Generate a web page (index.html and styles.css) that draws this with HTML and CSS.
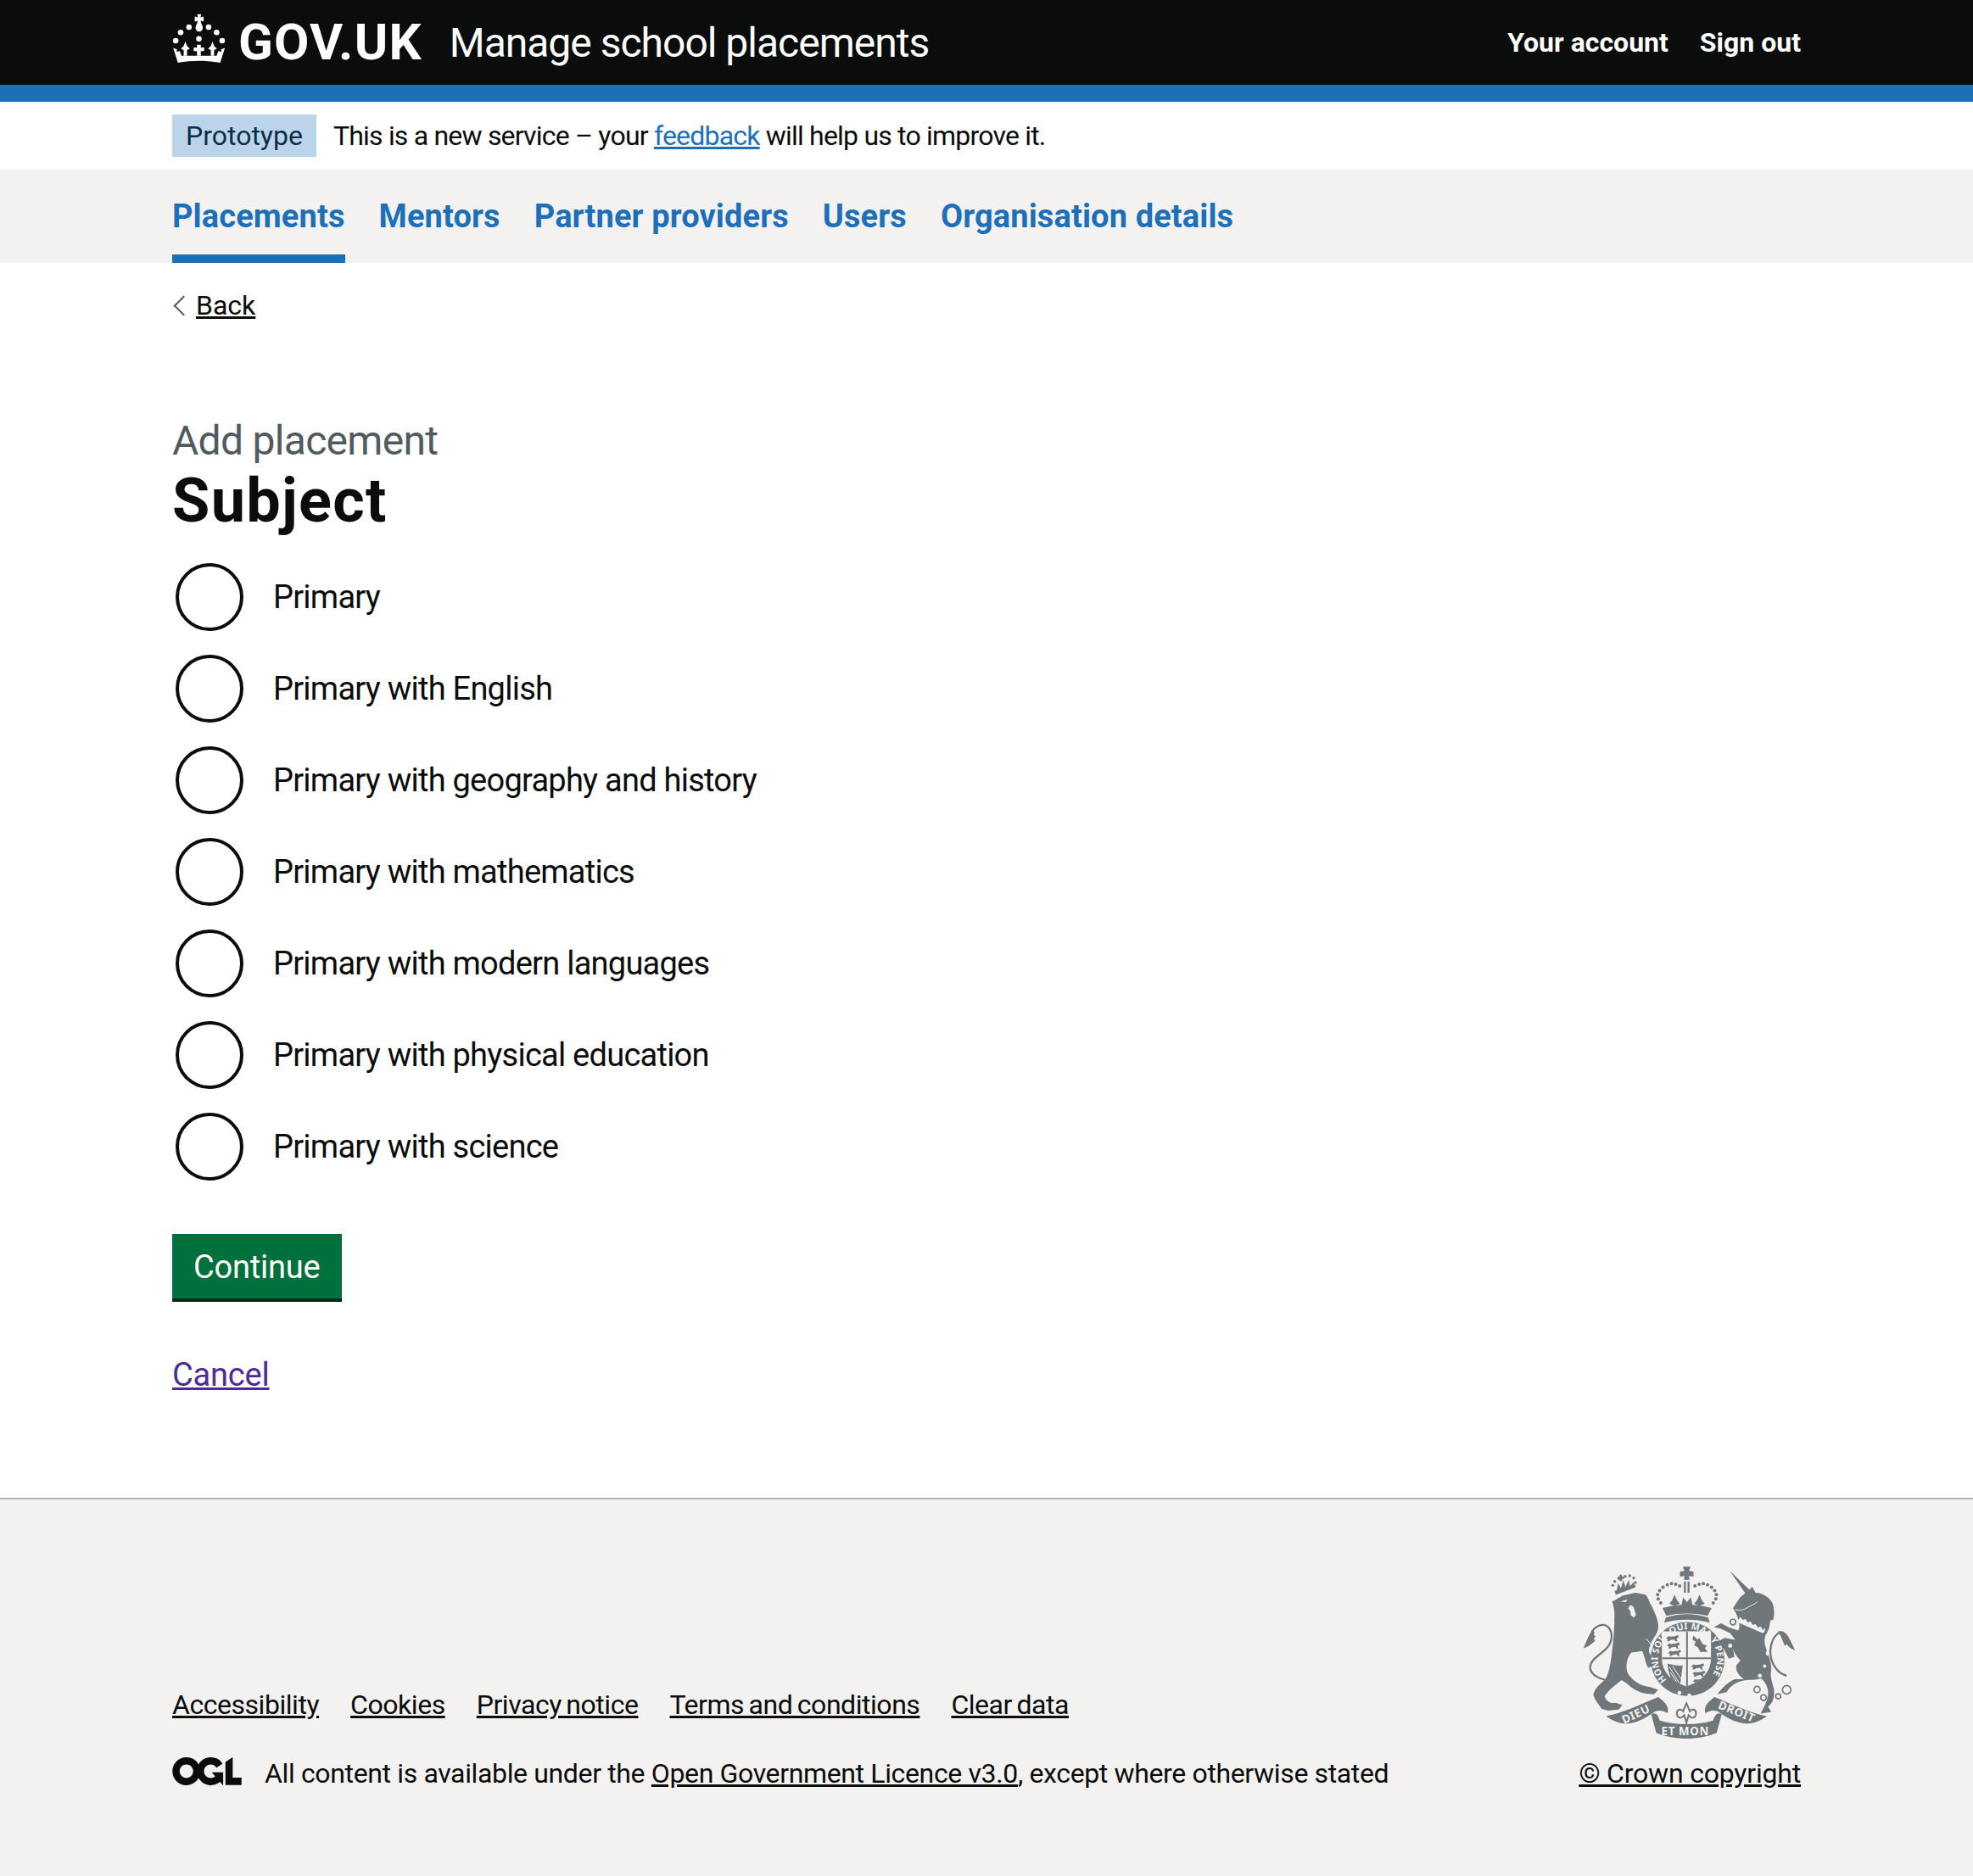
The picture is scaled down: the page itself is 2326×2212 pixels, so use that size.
FILE: index.html
```html
<!DOCTYPE html>
<html lang="en">
<head>
  <meta charset="UTF-8">
  <title>Subject - Add placement - Manage school placements</title>
  <link rel="stylesheet" href="styles.css">
</head>
<body>

  <header class="header">
    <div class="container header-inner">
      <a class="logo" href="#">
        <svg class="crown" viewBox="15 16 192 184" fill="#fff">
          <path d="M105 21h14l-2 12 11-3v18l-11-3 2 8c4 8 6 14 6 18a13 13 0 0 1-26 0c0-4 2-10 6-18l2-8-11 3V30l11 3z"/>
          <circle cx="75" cy="68" r="10"/><circle cx="146" cy="68" r="10"/>
          <circle cx="45" cy="87" r="10"/><circle cx="175" cy="87" r="10"/>
          <circle cx="27" cy="117" r="10"/><circle cx="195" cy="117" r="10"/>
          <circle cx="111" cy="110" r="10"/>
          <path d="M18 143l14 6-2 8 12-2 6 17h127l6-17 12 2-2-8 14-6-17 54c-48-9-103-9-153 0z"/>
          <path d="M62 120l6 16 10 10-10 5v21H56v-21l-10-5 10-10z"/>
          <path d="M160 120l6 16 10 10-10 5v21h-12v-21l-10-5 10-10z"/>
          <path d="M104 132h14v10h12v13h-12v17h-14v-17H92v-13h12z"/>
        </svg>
        <span class="logo-text">GOV.UK</span>
      </a>
      <a class="service-name" href="#">Manage school placements</a>
      <nav class="account-nav">
        <a href="#">Your account</a>
        <a href="#">Sign out</a>
      </nav>
    </div>
  </header>

  <div class="container phase-banner">
    <strong class="tag">Prototype</strong>
    <span class="phase-text">This is a new service – your <a class="link" href="#">feedback</a> will help us to improve it.</span>
  </div>

  <nav class="primary-nav">
    <div class="container primary-nav-list">
      <a class="nav-item active" href="#">Placements</a>
      <a class="nav-item" href="#">Mentors</a>
      <a class="nav-item" href="#">Partner providers</a>
      <a class="nav-item" href="#">Users</a>
      <a class="nav-item" href="#">Organisation details</a>
    </div>
  </nav>

  <main class="container main">
    <a class="back-link" href="#">Back</a>

    <form class="form">
      <span class="caption">Add placement</span>
      <h1 class="heading">Subject</h1>

      <div class="radios">
        <label class="radio"><span class="radio-mark"></span>Primary</label>
        <label class="radio"><span class="radio-mark"></span>Primary with English</label>
        <label class="radio"><span class="radio-mark"></span>Primary with geography and history</label>
        <label class="radio"><span class="radio-mark"></span>Primary with mathematics</label>
        <label class="radio"><span class="radio-mark"></span>Primary with modern languages</label>
        <label class="radio"><span class="radio-mark"></span>Primary with physical education</label>
        <label class="radio"><span class="radio-mark"></span>Primary with science</label>
      </div>

      <button class="button" type="button">Continue</button>
      <p class="cancel"><a href="#">Cancel</a></p>
    </form>
  </main>

  <footer class="footer">
    <div class="container footer-inner">
      <div class="footer-meta">
        <ul class="footer-links">
          <li><a href="#">Accessibility</a></li>
          <li><a href="#">Cookies</a></li>
          <li><a href="#">Privacy notice</a></li>
          <li><a href="#">Terms and conditions</a></li>
          <li><a href="#">Clear data</a></li>
        </ul>
        <div class="licence">
          <svg class="ogl" viewBox="0 0 483.2 195.7" fill="#0b0c0c">
            <path d="M421.5 142.8V.1l-50.7 32.3v161.1h112.4v-50.7zm-122.3-9.6A47.12 47.12 0 0 1 221 97.8c0-26 21.1-47.1 47.1-47.1 16.7 0 31.4 8.7 39.7 21.8l42.7-27.2A97.63 97.63 0 0 0 268.1 0c-36.5 0-68.3 20.1-85.1 49.7A98 98 0 0 0 97.8 0C43.9 0 0 43.9 0 97.8s43.9 97.8 97.8 97.8c36.5 0 68.3-20.1 85.1-49.7a97.76 97.76 0 0 0 149.6 25.4l19.4 22.2h3v-87.8h-80l24.3 27.5zM97.8 145c-26 0-47.1-21.1-47.1-47.1s21.1-47.1 47.1-47.1 47.2 21 47.2 47S123.8 145 97.8 145"/>
          </svg>
          <span>All content is available under the <a href="#">Open Government Licence v3.0</a>, except where otherwise stated</span>
        </div>
      </div>
      <div class="copyright">
        <svg class="crest" viewBox="60 40 790 640" fill="#6f777b">
          <defs>
            <clipPath id="shield-clip">
              <path d="M358 285h174v95c0 50-36 82-87 100-51-18-87-50-87-100z"/>
            </clipPath>
            <path id="garter-arc" d="M375 457a105 105 0 1 1 148 0"/>
            <path id="passant" d="M0 12l8-8 7 2 18-2 10-4 3 8-6 2-2 8 6 4h-10l-4-6-14 2-4 4h-8l4-6z"/>
          </defs>

          <!-- royal crown -->
          <path d="M432 56h28l-6 15 16 2v18l-16-2 2 13h-20l2-13-16 2V73l16-2z"/>
          <path d="M436 108h7v40h-7zM449 108h7v40h-7z"/>
          <g>
            <circle cx="345" cy="170" r="6"/><circle cx="343" cy="155" r="6"/><circle cx="350" cy="141" r="6"/>
            <circle cx="362" cy="129" r="6"/><circle cx="377" cy="120" r="6"/><circle cx="392" cy="116" r="6"/>
            <circle cx="407" cy="118" r="6"/><circle cx="421" cy="124" r="6"/><circle cx="475" cy="124" r="6"/>
            <circle cx="490" cy="118" r="6"/><circle cx="505" cy="116" r="6"/><circle cx="520" cy="120" r="6"/>
            <circle cx="534" cy="129" r="6"/><circle cx="545" cy="141" r="6"/><circle cx="551" cy="155" r="6"/>
            <circle cx="549" cy="170" r="6"/><circle cx="354" cy="184" r="6"/><circle cx="540" cy="184" r="6"/>
          </g>
          <path d="M360 202c30-8 60-12 87-12s57 4 87 12l-14 28c-25-6-50-8-73-8s-48 2-73 8z"/>
          <path d="M403 155l9 20 10 12-19 8-19-8 10-12zM491 155l9 20 10 12-19 8-19-8 10-12z"/>
          <path d="M433 165l14 16 14-16 6 30h-40z"/>
          <path d="M372 236c50-16 100-16 150 0l6 18c-55-14-110-14-162 0z"/>

          <!-- lion -->
          <g transform="translate(60 30)">
            <path d="M135 126l70-27-3-11-72 24z"/>
            <path d="M138 110l5-26 10 18 8-28 8 24 12-26 4 24 13-16 2 20z"/>
            <circle cx="124" cy="92" r="5"/><circle cx="131" cy="78" r="5"/><circle cx="146" cy="68" r="5"/>
            <circle cx="168" cy="60" r="5"/><circle cx="184" cy="58" r="5"/><circle cx="198" cy="66" r="5"/><circle cx="204" cy="82" r="5"/>
            <path d="M148 54h9v7h7v8h-7v8h-9v-8h-7v-8h7z"/>
            <path d="M122 150L160 128 205 118 240 125C250 135 252 150 262 165L275 195C285 220 290 240 280 262L262 290 252 318C250 335 262 345 280 360L292 378 280 388 262 378 250 385C240 370 238 345 228 325L208 328 190 330C172 350 168 385 178 405 192 425 215 448 255 452L285 462 270 478 245 476C215 472 190 455 172 438L155 428C135 445 112 460 95 485 102 505 118 512 135 508L158 516 145 532 108 536 85 530C75 515 62 500 55 480 60 455 82 440 98 425 112 400 118 360 122 320 128 280 128 250 130 225 128 205 135 190 122 150Z"/>
            <path d="M242 280l50 62" stroke="#f3f2f1" stroke-width="3" fill="none"/>
            <path d="M150 150l26-8-6 9zM186 162l12 6 8 30-8 8-10-8-2-16-8-8z" fill="#f3f2f1"/>
            <path d="M100 428C68 420 44 405 44 382 44 352 84 338 108 308 124 286 124 258 108 240 92 224 66 234 50 256" fill="none" stroke="#6f777b" stroke-width="7"/>
            <path d="M52 250C42 262 30 290 20 316 38 308 52 298 62 288 56 284 56 278 64 272 56 270 56 264 60 258z"/>
          </g>

          <!-- unicorn -->
          <g transform="translate(450 30)">
            <path d="M203 120L148 40 218 108 228 97 240 118C265 118 290 135 300 155 308 180 306 205 302 215L293 215 288 242 280 262C268 275 270 300 280 325 290 350 298 375 295 395 290 415 300 440 305 460 308 490 300 510 284 522L296 540 258 546C272 520 286 495 284 465 280 445 270 428 258 422 240 430 215 425 195 430 175 435 150 445 138 470L105 478C115 462 135 440 165 425L198 425C180 410 168 395 172 375L186 358C175 345 165 335 160 318L165 345 145 352 130 322 105 292 130 278 168 285 150 262 115 245 92 240 118 226 142 240 178 252C188 240 180 210 170 190L160 172 185 135Z"/>
            <path d="M186 204l8 10 10-3 8 12 10-3 8 12 10-3 8 12 10-3 8 12 8-8-2 14-6 6-92-40z" fill="#f3f2f1"/>
            <path d="M168 178c16 4 30 2 44-8 12-8 26-10 34-20" fill="none" stroke="#f3f2f1" stroke-width="3"/>
            <g fill="#f3f2f1" stroke="#6f777b" stroke-width="5">
              <circle cx="160" cy="222" r="10"/><circle cx="150" cy="306" r="10"/>
            </g>
            <g fill="none" stroke="#6f777b" stroke-width="5">
              <circle cx="245" cy="461" r="11"/><circle cx="268" cy="490" r="10"/>
              <circle cx="320" cy="485" r="9"/><circle cx="350" cy="462" r="15"/>
            </g>
            <circle cx="285" cy="332" r="9" fill="#f3f2f1"/>
            <circle cx="255" cy="412" r="7" fill="#f3f2f1"/>
            <circle cx="272" cy="378" r="6" fill="#f3f2f1"/>
            <path d="M350 412c-28-6-50-34-56-66-6-30 4-70 26-84 16-8 26 4 34 16" fill="none" stroke="#6f777b" stroke-width="7"/>
            <path d="M320 255c22-4 34 8 60 68-14-6-24-14-30-22l-6 6c-6-12-10-26-24-52z"/>
          </g>

          <!-- garter and shield -->
          <circle cx="449" cy="383" r="131"/>
          <path d="M358 285h174v95c0 50-36 82-87 100-51-18-87-50-87-100z" fill="#f3f2f1"/>
          <g clip-path="url(#shield-clip)">
            <use href="#passant" x="372" y="298"/><use href="#passant" x="376" y="324"/><use href="#passant" x="380" y="350"/>
            <use href="#passant" x="462" y="398"/><use href="#passant" x="466" y="424"/><use href="#passant" x="468" y="450"/>
            <path d="M470 300l14 14 6-6 12 22 16 6-8 8 10 14h-26l-8-16-14-8 6-12-12-8z"/>
            <path d="M378 400c26 4 46 10 54 4l-8 62-14 12c-18-18-30-44-32-78z"/>
            <path d="M384 410l34 56M396 408l30 46M388 430l22 34" stroke="#f3f2f1" stroke-width="3"/>
            <path d="M447 285v200M358 380h174" stroke="#6f777b" stroke-width="6"/>
          </g>
          <path d="M388 480c40 36 86 36 128 10l-12-18c-30 16-70 16-100-6z"/>
          <g fill="#f3f2f1">
            <circle cx="420" cy="503" r="7"/><circle cx="455" cy="512" r="7"/>
            <text class="crest-garter"><textPath href="#garter-arc" textLength="470" lengthAdjust="spacing">HONI SOIT QUI MAL Y PENSE</textPath></text>
          </g>

          <!-- motto -->
          <path d="M160 585C220 575 290 540 345 518 370 535 385 555 378 575 355 560 335 565 320 578 290 600 260 610 235 612 205 612 180 600 160 585Z"/>
          <path d="M730 585C670 575 600 540 545 518 520 535 505 555 512 575 535 560 555 565 570 578 600 600 630 610 655 612 685 612 710 600 730 585Z"/>
          <path d="M320 578C335 570 345 580 350 600 400 618 490 618 540 600 545 580 555 570 570 578L552 645C490 672 400 672 338 645Z"/>
          <path d="M445 540l12 28c6-10 22-8 22 8 0 12-12 20-20 12l-6-6-8 26-8-26-6 6c-8 8-20 0-20-12 0-16 16-18 22-8z" fill="none" stroke="#6f777b" stroke-width="6"/>
          <g fill="#f3f2f1">
            <text class="crest-text" transform="rotate(-25 265 575)" x="212" y="592">DIEU</text>
            <text class="crest-text" x="356" y="652">ET MON</text>
            <text class="crest-text" transform="rotate(22 620 570)" x="555" y="582">DROIT</text>
          </g>
        </svg>
        <a class="crown-copyright" href="#">© Crown copyright</a>
      </div>
    </div>
  </footer>

</body>
</html>
```

FILE: styles.css
```css
* {
  box-sizing: border-box;
}
body {
  margin: 0;
  font-family: Roboto, sans-serif;
  font-size: 38px;
  color: #0b0c0c;
  background-color: #fff;
}
a {
  color: inherit;
}
.container {
  width: 1920px;
  margin: 0 auto;
}
.header {
  background-color: #0b0c0c;
  border-bottom: 20px solid #1d70b8;
  height: 120px;
  color: #fff;
}
.header-inner {
  display: flex;
  align-items: center;
  height: 100px;
}
.header a {
  color: #fff;
  text-decoration: none;
}
.logo {
  display: flex;
  align-items: center;
  gap: 15px;
  margin-right: 32px;
}
.crown {
  width: 63px;
  height: 60px;
  margin-top: -11px;
}
.logo-text {
  margin-top: -2px;
  font-size: 60px;
  font-weight: 700;
  letter-spacing: 1.2px;
}
.service-name {
  font-size: 48px;
  letter-spacing: -1px;
}
.account-nav {
  display: flex;
  gap: 37px;
  margin-left: auto;
  font-size: 32px;
  font-weight: 700;
}
.phase-banner {
  display: flex;
  align-items: center;
  gap: 20px;
  height: 80px;
  font-size: 32px;
}
.phase-text {
  letter-spacing: -0.8px;
}
.tag {
  padding: 6px 16px;
  font-weight: 400;
  color: #0c2d4a;
  background-color: #bbd4ea;
}
.link {
  color: #1d70b8;
}
.primary-nav {
  height: 110px;
  background-color: #f3f2f1;
}
.primary-nav-list {
  display: flex;
  gap: 40px;
}
.nav-item {
  height: 110px;
  padding-top: 33px;
  font-size: 38px;
  font-weight: 700;
  letter-spacing: 0.12px;
  color: #1d70b8;
  text-decoration: none;
}
.nav-item.active {
  border-bottom: 10px solid #1d70b8;
}
.main {
  padding-bottom: 121px;
}
.back-link {
  display: inline-block;
  margin-top: 30px;
  padding-left: 28px;
  font-size: 32px;
  line-height: 40px;
  position: relative;
}
.back-link::before {
  content: "";
  position: absolute;
  left: 5px;
  top: 12px;
  width: 15px;
  height: 15px;
  border-left: 2px solid #505a5f;
  border-bottom: 2px solid #505a5f;
  transform: rotate(45deg);
}
.form {
  margin-top: 112px;
}
.caption {
  display: block;
  font-size: 48px;
  line-height: 56px;
  letter-spacing: -0.7px;
  color: #505a5f;
}
.heading {
  margin: 7px 0 33px;
  font-size: 72px;
  line-height: 72px;
  font-weight: 700;
  letter-spacing: 1.3px;
}
.radios {
  display: flex;
  flex-direction: column;
  gap: 20px;
  margin-bottom: 59px;
  letter-spacing: -0.75px;
}
.radio {
  display: flex;
  align-items: center;
  height: 88px;
  padding-left: 4px;
}
.radio-mark {
  width: 80px;
  height: 80px;
  margin-right: 35px;
  border: 4px solid #0b0c0c;
  border-radius: 50%;
}
.button {
  display: block;
  height: 80px;
  padding: 0 25px 2px;
  font-family: inherit;
  font-size: 38px;
  letter-spacing: -0.2px;
  color: #fff;
  background-color: #00703c;
  border: none;
  box-shadow: inset 0 -4px 0 #002d18;
}
.cancel {
  margin: 62px 0 0;
  line-height: 48px;
  letter-spacing: -0.2px;
}
.cancel a {
  color: #4c2c92;
}
.footer {
  height: 446px;
  background-color: #f3f2f1;
  border-top: 2px solid #b1b4b6;
  font-size: 32px;
}
.footer-inner {
  display: flex;
  justify-content: space-between;
  align-items: flex-end;
  height: 100%;
  padding-bottom: 101px;
  line-height: 40px;
}
.footer-links {
  display: flex;
  gap: 37px;
  margin: 0 0 41px;
  padding: 0;
  list-style: none;
  letter-spacing: -0.46px;
  word-spacing: -2px;
}
.licence {
  display: flex;
  align-items: flex-start;
  gap: 27px;
  letter-spacing: -0.36px;
}
.ogl {
  width: 82px;
  height: 33px;
  margin-top: 1px;
}
.copyright {
  display: flex;
  flex-direction: column;
  align-items: flex-end;
  gap: 16px;
}
.crown-copyright {
  letter-spacing: -0.2px;
}
.crest {
  width: 263px;
  height: 213px;
}
.crest-text {
  font-family: "Noto Sans", sans-serif;
  font-size: 40px;
  font-weight: 700;
  letter-spacing: 2px;
}
.crest-garter {
  font-family: "Noto Sans", sans-serif;
  font-size: 32px;
  font-weight: 700;
}
```
